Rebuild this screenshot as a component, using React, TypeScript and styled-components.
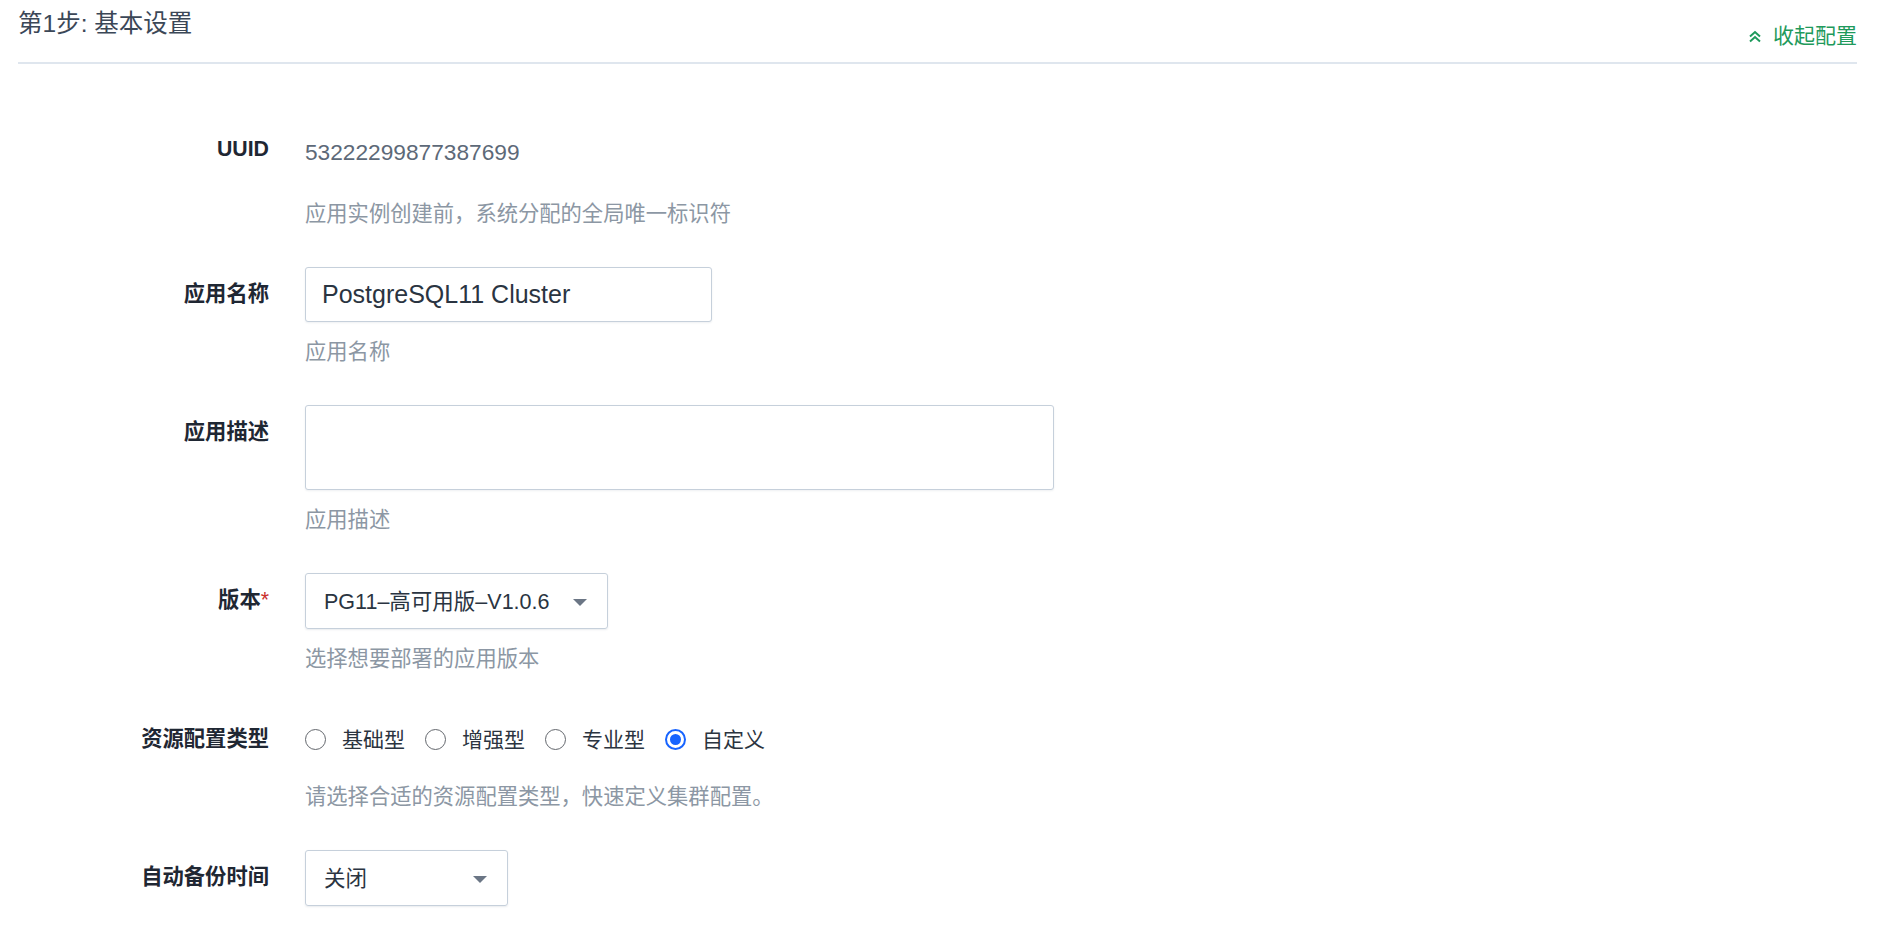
import React from "react";
import styled, { createGlobalStyle } from "styled-components";

const GlobalStyle = createGlobalStyle`
  html, body {
    margin: 0;
    padding: 0;
    background: #fff;
  }
  body {
    font-family: "Liberation Sans", "Noto Sans CJK SC", sans-serif;
    color: #222b38;
  }
  * {
    box-sizing: border-box;
  }
`;

const Page = styled.div`
  padding: 0 41px 0 18px;
`;

const Header = styled.div`
  display: flex;
  justify-content: space-between;
  align-items: flex-start;
  height: 64px;
  border-bottom: 2px solid #dfe6ee;
`;

const Title = styled.h2`
  margin: 8px 0 0;
  font-size: 24.5px;
  line-height: 32px;
  font-weight: 400;
  color: #3b4757;
`;

const Collapse = styled.a`
  display: flex;
  align-items: center;
  gap: 11px;
  margin-top: 22px;
  font-size: 21px;
  line-height: 28px;
  color: #1f9a5c;
  cursor: pointer;
`;

const Form = styled.div`
  padding-top: 71px;
`;

const Field = styled.div`
  display: grid;
  grid-template-columns: 251px auto;
  column-gap: 36px;
  margin-bottom: 39px;
`;

const Label = styled.div<{ $offset?: number }>`
  text-align: right;
  font-size: 21.3px;
  line-height: 28px;
  font-weight: 600;
  color: #1f2733;
  padding-top: ${(p) => (p.$offset ?? 13)}px;
`;

const Required = styled.span`
  color: #c9302c;
  font-weight: 400;
`;

const Control = styled.div`
  display: flex;
  flex-direction: column;
  align-items: flex-start;
`;

const Hint = styled.div`
  margin-top: 16px;
  font-size: 21.3px;
  line-height: 28px;
  color: #8c97a4;
`;

const Static = styled.div`
  padding: 3px 0 18px;
  font-size: 22.7px;
  line-height: 28px;
  color: #5d6978;
`;

const TextInput = styled.input`
  width: 407px;
  height: 55px;
  padding: 0 16px;
  font-family: inherit;
  font-size: 25px;
  color: #2a3441;
  border: 1px solid #c6d0db;
  border-radius: 3px;
  box-shadow: 0 1px 2px rgba(40, 60, 90, 0.08);
  outline: none;
`;

const TextArea = styled.textarea`
  width: 749px;
  height: 85px;
  padding: 12px 16px;
  font-family: inherit;
  font-size: 21px;
  border: 1px solid #c6d0db;
  border-radius: 3px;
  box-shadow: 0 1px 2px rgba(40, 60, 90, 0.08);
  resize: none;
  outline: none;
`;

const Select = styled.div<{ $width: number }>`
  display: flex;
  align-items: center;
  justify-content: space-between;
  width: ${(p) => p.$width}px;
  height: 56px;
  padding: 0 20px 4px 18px;
  font-size: 21.5px;
  color: #2a3441;
  border: 1px solid #c6d0db;
  border-radius: 3px;
  box-shadow: 0 1px 2px rgba(40, 60, 90, 0.1);
  cursor: pointer;
`;

const Caret = styled.span`
  width: 0;
  height: 0;
  margin-top: 6px;
  border-left: 7.5px solid transparent;
  border-right: 7.5px solid transparent;
  border-top: 7px solid #6b7685;
`;

const RadioGroup = styled.div`
  display: flex;
  align-items: center;
  height: 55px;
`;

const RadioItem = styled.label`
  display: flex;
  align-items: center;
  gap: 16px;
  margin-right: 20px;
  font-size: 21px;
  line-height: 28px;
  color: #2b3440;
  cursor: pointer;
`;

const RadioCircle = styled.span<{ $checked?: boolean }>`
  position: relative;
  width: 21px;
  height: 21px;
  border-radius: 50%;
  border: ${(p) => (p.$checked ? "2px solid #1764ff" : "1.6px solid #63676d")};
  &::after {
    content: "";
    display: ${(p) => (p.$checked ? "block" : "none")};
    position: absolute;
    top: 3px;
    left: 3px;
    width: 11px;
    height: 11px;
    border-radius: 50%;
    background: #1764ff;
  }
`;

const DoubleChevron = () => (
  <svg width="14" height="13" viewBox="0 0 14 13" fill="none">
    <path d="M2 6.5 L7 2 L12 6.5" stroke="#1f9a5c" strokeWidth="2" />
    <path d="M2 11.5 L7 7 L12 11.5" stroke="#1f9a5c" strokeWidth="2" />
  </svg>
);

const resourceTypes = ["基础型", "增强型", "专业型", "自定义"];

export default function App() {
  return (
    <Page>
      <GlobalStyle />
      <Header>
        <Title>第1步: 基本设置</Title>
        <Collapse>
          <DoubleChevron />
          收起配置
        </Collapse>
      </Header>
      <Form>
        <Field>
          <Label $offset={0}>UUID</Label>
          <Control>
            <Static>53222299877387699</Static>
            <Hint>应用实例创建前，系统分配的全局唯一标识符</Hint>
          </Control>
        </Field>
        <Field>
          <Label>应用名称</Label>
          <Control>
            <TextInput defaultValue="PostgreSQL11 Cluster" />
            <Hint>应用名称</Hint>
          </Control>
        </Field>
        <Field>
          <Label>应用描述</Label>
          <Control>
            <TextArea defaultValue="" />
            <Hint>应用描述</Hint>
          </Control>
        </Field>
        <Field>
          <Label>
            版本<Required>*</Required>
          </Label>
          <Control>
            <Select $width={303}>
              <span>PG11–高可用版–V1.0.6</span>
              <Caret />
            </Select>
            <Hint>选择想要部署的应用版本</Hint>
          </Control>
        </Field>
        <Field>
          <Label>资源配置类型</Label>
          <Control>
            <RadioGroup>
              {resourceTypes.map((t) => (
                <RadioItem key={t}>
                  <RadioCircle $checked={t === "自定义"} />
                  {t}
                </RadioItem>
              ))}
            </RadioGroup>
            <Hint>请选择合适的资源配置类型，快速定义集群配置。</Hint>
          </Control>
        </Field>
        <Field>
          <Label>自动备份时间</Label>
          <Control>
            <Select $width={203}>
              <span>关闭</span>
              <Caret />
            </Select>
          </Control>
        </Field>
      </Form>
    </Page>
  );
}
